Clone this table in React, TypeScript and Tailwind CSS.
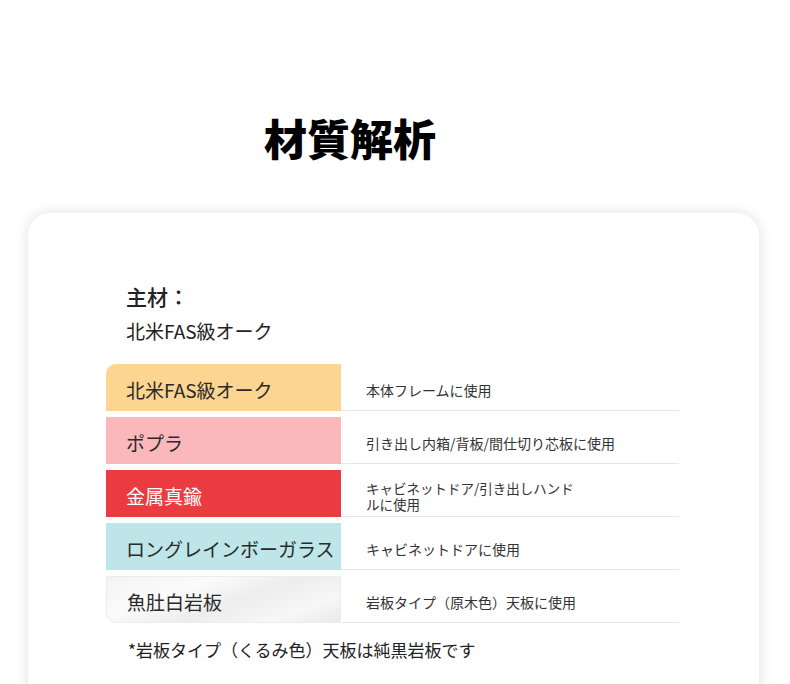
import React from 'react';

type MaterialRow = {
    name: string;
    usage: React.ReactNode;
    cell: string;
    text: string;
};

const rows: MaterialRow[] = [
    { name: '北米FAS級オーク', usage: '本体フレームに使用', cell: 'bg-[#fcd590] rounded-tl-[10px]', text: 'text-[#2a2a2a]' },
    { name: 'ポプラ', usage: '引き出し内箱/背板/間仕切り芯板に使用', cell: 'bg-[#fbb8bc] pl-[17px]', text: 'text-[#2a2a2a]' },
    {
        name: '金属真鍮',
        usage: (
            <div className="flex flex-col text-[13.5px] leading-[16px]">
                <span>キャビネットドア/引き出しハンド</span>
                <span>ルに使用</span>
            </div>
        ),
        cell: 'bg-[#ea3c40]',
        text: 'text-white',
    },
    { name: 'ロングレインボーガラス', usage: 'キャビネットドアに使用', cell: 'bg-[#bee5e8]', text: 'text-[#2a2a2a]' },
    {
        name: '魚肚白岩板',
        usage: '岩板タイプ（原木色）天板に使用',
        cell: 'bg-[linear-gradient(160deg,#f3f3f3_0%,#fbfbfb_30%,#ededed_55%,#f7f7f7_80%,#e9e9e9_100%)] rounded-bl-[10px] border border-[#ececec]',
        text: 'text-[#2a2a2a]',
    },
];

export default function App() {
    return (
        <div className="w-[790px] h-[684px] overflow-hidden bg-white font-['Noto_Sans_CJK_JP','Noto_Sans',sans-serif]">
            {/* Title */}
            <div className="pt-[116px] pl-[264px]">
                <h1 className="text-[43px] leading-none font-black text-black">材質解析</h1>
            </div>

            {/* Card */}
            <div className="mt-[54px] ml-[28px] w-[731px] h-[520px] rounded-[22px] bg-white shadow-[0_0_14px_rgba(0,0,0,0.13)] pt-[73px] pl-[78px]">
                <div className="pl-[20px] text-[#222]">
                    <p className="text-[21px] leading-none font-medium">主材：</p>
                    <p className="mt-[14px] text-[19px] leading-none">北米FAS級オーク</p>
                </div>

                <div className="mt-[24px] flex flex-col gap-[6px] w-[573px]">
                    {rows.map((row, i) => (
                        <div key={i} className="flex h-[47px]">
                            <div className={`w-[235px] h-full flex items-center pl-[20px] pt-[3px] ${row.cell}`}>
                                <span className={`text-[19px] leading-none ${row.text}`}>{row.name}</span>
                            </div>
                            <div className="flex-1 h-full flex items-center pl-[25px] pt-[6px] border-b border-[#e6e6e6] text-[14px] leading-none text-[#333]">
                                {row.usage}
                            </div>
                        </div>
                    ))}
                </div>

                <p className="mt-[18px] pl-[22px] text-[17px] leading-none text-[#222]">*岩板タイプ（くるみ色）天板は純黒岩板です</p>
            </div>
        </div>
    );
}
